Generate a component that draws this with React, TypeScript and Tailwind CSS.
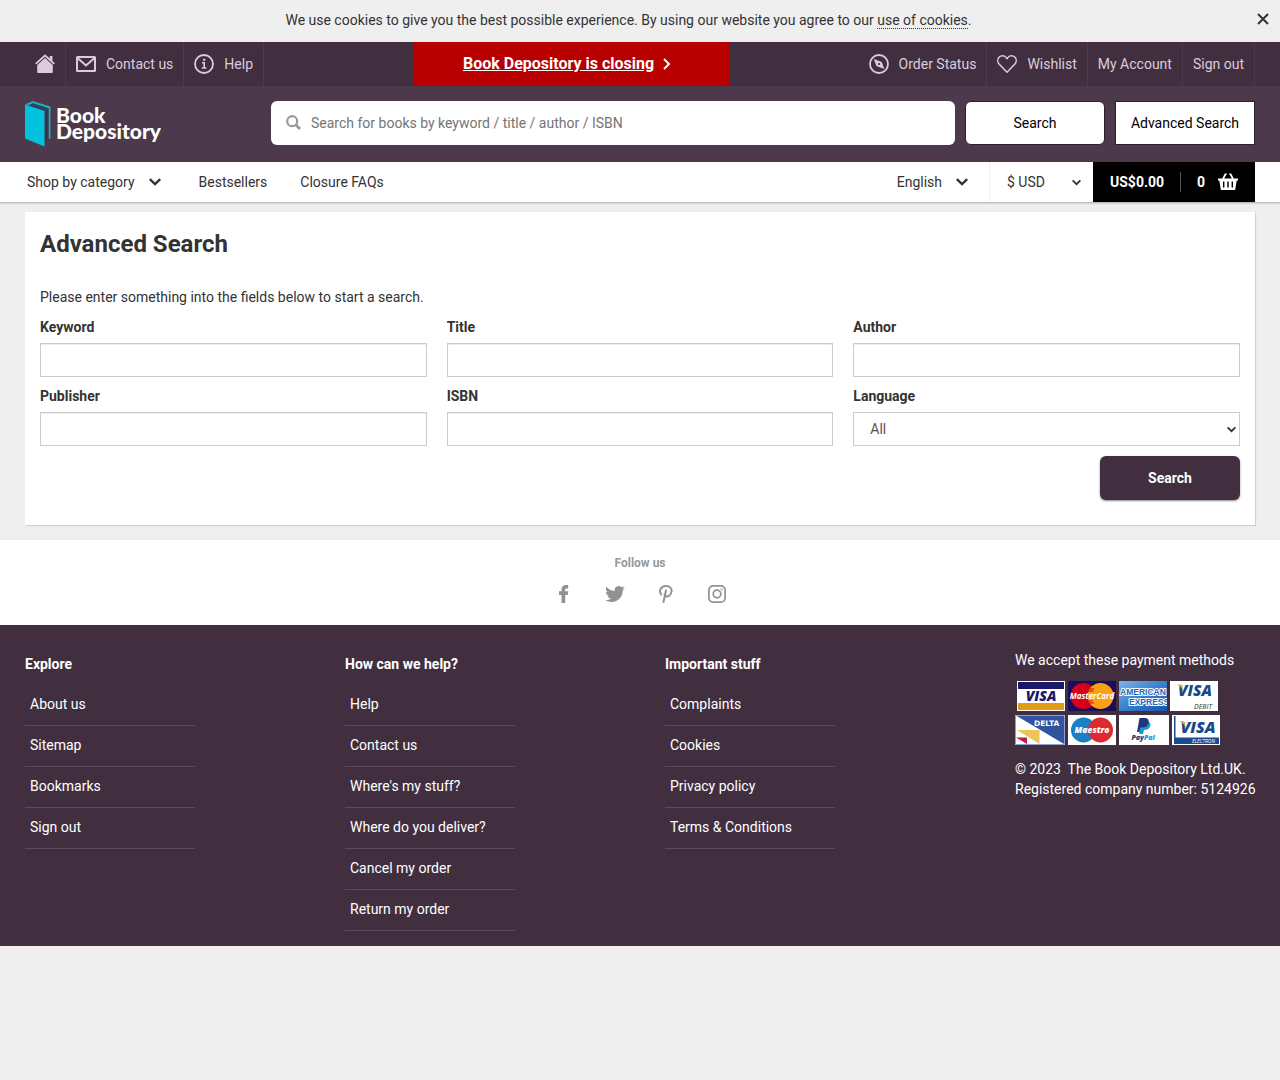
import React from "react";

type LinkItem = string;

const HomeIcon = () => (
  <svg width="20" height="20" viewBox="0 0 20 20" fill="currentColor" aria-hidden="true">
    <path d="M10 0.3 14.800 4.600V2h2.600v5L19.900 9.300l-1.200 1.200L10 2.700 1.300 10.500.1 9.300z" />
    <path d="M10 3.900 17.800 10.900V18q0 1-1 1H3.200q-1 0-1-1v-7.100z" />
  </svg>
);

const MailIcon = () => (
  <svg width="20" height="20" viewBox="0 0 20 20" fill="none" stroke="currentColor" strokeWidth="2" aria-hidden="true">
    <rect x="1" y="3" width="18" height="14" rx="0.5" />
    <path d="M1.500 4l8.500 7.500L18.500 4" />
  </svg>
);

const InfoIcon = () => (
  <svg width="20" height="20" viewBox="0 0 20 20" fill="none" stroke="currentColor" strokeWidth="1.8" aria-hidden="true">
    <circle cx="10" cy="10" r="9" />
    <path d="M8 8.800h2.200V14M7.800 14h4.600" strokeWidth="1.600" />
    <path d="M10.200 4.800v2" strokeWidth="2.200" />
  </svg>
);

const CompassIcon = () => (
  <svg width="20" height="20" viewBox="0 0 20 20" aria-hidden="true">
    <circle cx="10" cy="10" r="9" fill="none" stroke="currentColor" strokeWidth="1.8" />
    <path fillRule="evenodd" fill="currentColor" d="M4.800 5l8 3L15.300 15l-7.900-3zM10 8.900a1.100 1.100 0 100 2.200 1.100 1.100 0 000-2.200z" />
  </svg>
);

const HeartIcon = () => (
  <svg width="20" height="20" viewBox="0 0 20 20" fill="none" stroke="currentColor" strokeWidth="1.5" strokeLinejoin="round" aria-hidden="true">
    <path d="M10 18.200 2.100 10C.3 8 .4 5 2 3.200c2-2 5.300-1.900 7 .2l1 1.300 1-1.300c1.700-2.100 5-2.200 7-.2 1.600 1.800 1.700 4.800-.1 6.800z" />
  </svg>
);

const ChevronDown = ({ size = 12 }: { size?: number }) => (
  <svg width={size} height={size} viewBox="0 0 12 12" fill="none" stroke="currentColor" strokeWidth="2.4" aria-hidden="true">
    <path d="M0.800 3.200l5.200 5 5.200-5" />
  </svg>
);

const BasketIcon = () => (
  <svg width="20" height="18" viewBox="0 0 20 18" aria-hidden="true">
    <path d="M5 6l2.500-5M15 6l-2.500-5" stroke="currentColor" strokeWidth="1.700" />
    <path d="M7.200 1.100h1.600M11.200 1.100h1.600" stroke="currentColor" strokeWidth="1.400" />
    <path fill="currentColor" fillRule="evenodd" d="M0 5.500h20v2h-1.300L17.200 17H2.800L1.300 7.500H0zM5 8.500v6h1.400v-6zM9.300 8.500v6h1.400v-6zM13.600 8.500v6H15v-6z" />
  </svg>
);

const Logo = () => (
  <a href="#" aria-label="Book Depository" className="block h-[46px] w-[136px] shrink-0">
    <svg width="136" height="46" viewBox="0 0 136 46" aria-hidden="true">
      <path d="M0 3.500 7.500 0 25.500 5.500V37.500l-2 .8V7.500L7.500 2.500l-3 1.500z" fill="#2aa9ba" />
      <path d="M4.500 4 7.800 2.300 23.500 7.300V9l-3.500 1.500z" fill="#1d4961" />
      <path d="M20 10 23.500 8v30.300L20 40z" fill="#3b3650" />
      <path d="M0 3.500 19.500 10V45.500L0 37.500z" fill="#00c1de" />
      <g fill="#fff" fontFamily="Lato" fontWeight="900" fontSize="21">
        <text x="31" y="21.500">Book</text>
        <text x="31" y="38">Depository</text>
      </g>
    </svg>
  </a>
);

const topLink = "flex h-full items-center gap-2.5 border-r border-[#4d3a4d] px-2.5";

const FooterColumn = ({ title, links }: { title: string; links: LinkItem[] }) => (
  <section className="w-80">
    <h2 className="pt-[9px] font-bold leading-5">{title}</h2>
    <ul className="mt-[11px] w-[170px]">
      {links.map((link) => (
        <li key={link} className="border-b border-[#5c4d5d]">
          <a href="#" className="block px-[5px] pt-[9px] pb-[11px] leading-5">{link}</a>
        </li>
      ))}
    </ul>
  </section>
);

const Field = ({ id, label }: { id: string; label: string }) => (
  <div>
    <label htmlFor={id} className="mb-1.5 block font-bold leading-5">{label}</label>
    <input id={id} type="text" className="block h-[34px] w-full border border-[#ccc] px-3 shadow-[inset_0_1px_1px_rgba(0,0,0,0.075)] outline-none" />
  </div>
);

const cardText = { fontFamily: "Open Sans", fontWeight: 800, fontStyle: "italic" } as const;

const Visa = () => (
  <svg width="48" height="30" viewBox="0 0 48 30" role="img" aria-label="Visa">
    <rect width="48" height="30" fill="#fff" />
    <rect x="1" y="1" width="46" height="7" fill="#1a1768" />
    <rect x="1" y="22" width="46" height="7" fill="#e29c14" />
    <text x="24" y="20" textAnchor="middle" fontSize="14" fill="#1a1768" {...cardText}>VISA</text>
  </svg>
);

const MasterCard = () => (
  <svg width="48" height="30" viewBox="0 0 48 30" role="img" aria-label="MasterCard">
    <rect width="48" height="30" fill="#1b0d5e" />
    <circle cx="15.500" cy="15" r="13" fill="#d6001c" />
    <circle cx="32.500" cy="15" r="13" fill="#f9a013" />
    <path d="M20 8h6M19.500 10h6M19 20h6M20 22h6" stroke="#d6001c" />
    <text x="24" y="18" textAnchor="middle" fontSize="8" fill="#fff" fontFamily="Open Sans" fontWeight="700" fontStyle="italic">MasterCard</text>
  </svg>
);

const Amex = () => (
  <svg width="48" height="30" viewBox="0 0 48 30" role="img" aria-label="American Express">
    <defs>
      <linearGradient id="amex" x1="0" y1="0" x2="1" y2="1">
        <stop offset="0" stopColor="#7db4e6" />
        <stop offset="0.500" stopColor="#3a80cc" />
        <stop offset="1" stopColor="#1257b0" />
      </linearGradient>
    </defs>
    <rect width="48" height="30" fill="url(#amex)" />
    <g fill="#2567b5" stroke="#fff" strokeWidth="2" strokeLinejoin="round" paintOrder="stroke" fontFamily="Liberation Sans" fontWeight="700" fontSize="8.500">
      <text x="1" y="13.500">AMERICAN</text>
      <text x="10" y="23.500">EXPRESS</text>
    </g>
  </svg>
);

const VisaDebit = () => (
  <svg width="48" height="30" viewBox="0 0 48 30" role="img" aria-label="Visa Debit">
    <rect width="48" height="30" fill="#fff" />
    <text x="25" y="14.500" textAnchor="middle" fontSize="15.500" fill="#154a8b" {...cardText}>VISA</text>
    <path d="M7 3.500h3.500q1.500 0 2 2.500l.5 3q-2-3.500-6-5.500z" fill="#f0ad25" />
    <text x="24" y="28" fontSize="7" fill="#333" fontFamily="Open Sans" fontStyle="italic">DEBIT</text>
  </svg>
);

const Delta = () => (
  <svg width="50" height="30" viewBox="0 0 50 30" role="img" aria-label="Delta">
    <rect width="50" height="30" fill="#fff" />
    <path d="M0 0h49v29z" fill="#31549e" />
    <path d="M2 15h22.500v14z" fill="#eac55c" />
    <path d="M1 22.500h11V29z" fill="#c21a46" />
    <path d="M.5.500h49v29H.5z" fill="none" stroke="#8ca1cf" />
    <text x="19" y="11" fontSize="7.500" fontWeight="700" fill="#fff" fontFamily="DejaVu Sans">DELTA</text>
  </svg>
);

const Maestro = () => (
  <svg width="48" height="30" viewBox="0 0 48 30" role="img" aria-label="Maestro">
    <rect width="48" height="30" fill="#fff" />
    <circle cx="15.500" cy="15" r="12.500" fill="#1b7fc3" />
    <circle cx="32.500" cy="15" r="12.500" fill="#dc2a31" />
    <text x="24" y="18" textAnchor="middle" fontSize="8.500" fill="#fff" {...cardText}>Maestro</text>
  </svg>
);

const PayPal = () => (
  <svg width="50" height="30" viewBox="0 0 50 30" role="img" aria-label="PayPal">
    <rect width="50" height="30" fill="#fff" />
    <path d="M23 6h6q3.500 2 2 6-1.500 3-6 3l-1 4h-4z" fill="#179bd7" />
    <path d="M20.500 3H27q3.500 1 2.500 5-1 4.500-6 4.500h-2L20.500 17H18z" fill="#1f357c" />
    <text x="12.500" y="25" fontSize="7" {...cardText}>
      <tspan fill="#253b80">Pay</tspan>
      <tspan fill="#179bd7">Pal</tspan>
    </text>
  </svg>
);

const VisaElectron = () => (
  <svg width="48" height="30" viewBox="0 0 48 30" role="img" aria-label="Visa Electron">
    <rect width="48" height="30" fill="#fff" />
    <path d="M2 1h1.500v21.500H47V29H2z" fill="#1a4a90" />
    <text x="26" y="17.500" textAnchor="middle" fontSize="16" fill="#154a8b" {...cardText}>VISA</text>
    <path d="M7.500 6H11q1.500 0 2 2.500l.5 3q-2-3.500-6-5.500z" fill="#f0ad25" />
    <text x="20" y="28" fontSize="5" fill="#fff" fontFamily="Open Sans" fontStyle="italic">ELECTRON</text>
  </svg>
);

export default function App() {
  return (
    <div className="min-h-screen bg-[#efefef] font-[Roboto,sans-serif] text-sm leading-5 text-[#333]">
      <div className="flex h-[42px] items-center bg-[#efefef] pr-[11px]">
        <p className="flex-1 pb-0.5 text-center">
          We use cookies to give you the best possible experience. By using our website you agree to our{" "}
          <a href="#" className="border-b border-dotted border-[#333]">use of cookies</a>.
        </p>
        <button type="button" aria-label="Close" className="pb-1">
          <svg width="12" height="12" viewBox="0 0 12 12" stroke="currentColor" strokeWidth="2" aria-hidden="true">
            <path d="M1 1l10 10M11 1L1 11" />
          </svg>
        </button>
      </div>

      <header>
        <nav aria-label="Account" className="flex h-11 items-center bg-[#412f40] px-[25px] text-[#dccbdc]">
          <div className="flex h-full">
            <a href="#" aria-label="Home" className={topLink}><HomeIcon /></a>
            <a href="#" className={topLink}><MailIcon />Contact us</a>
            <a href="#" className={topLink}><InfoIcon />Help</a>
          </div>
          <a href="#" className="mr-auto ml-[149px] flex h-full w-[316px] items-center justify-center gap-2 bg-[#b80000] pr-2 text-base font-bold text-white">
            <span className="underline">Book Depository is closing</span>
            <svg width="9" height="12" viewBox="0 0 9 12" fill="none" stroke="currentColor" strokeWidth="2" aria-hidden="true">
              <path d="M2 1l5 5-5 5" />
            </svg>
          </a>
          <div className="flex h-full">
            <a href="#" className={topLink}><CompassIcon />Order Status</a>
            <a href="#" className={topLink}><HeartIcon />Wishlist</a>
            <a href="#" className={topLink}>My Account</a>
            <a href="#" className={topLink}>Sign out</a>
          </div>
        </nav>

        <div className="flex h-[76px] items-start bg-[#4c394b] px-[25px] pt-[15px]">
          <Logo />
          <form className="ml-[110px] flex flex-1 gap-2.5">
            <div className="flex h-11 flex-1 items-center gap-[9px] rounded-md bg-white pl-[15px]">
              <svg width="16" height="16" viewBox="0 0 16 16" fill="none" stroke="#999" strokeWidth="2.200" aria-hidden="true">
                <circle cx="6.200" cy="6.200" r="5" />
                <path d="M10 10l4 4" strokeWidth="2.800" />
              </svg>
              <input type="search" aria-label="Search for books" placeholder="Search for books by keyword / title / author / ISBN" className="h-full min-w-0 flex-1 outline-none placeholder:text-[#757575]" />
            </div>
            <button type="button" className="h-11 w-[140px] rounded-md border border-[#2d1f2c] bg-white text-black">Search</button>
            <a href="#" className="flex h-11 w-[140px] items-center justify-center border border-[#2d1f2c] bg-white text-black">Advanced Search</a>
          </form>
        </div>

        <nav aria-label="Main" className="flex h-10 items-center bg-white px-[25px] shadow-[0_1px_2px_rgba(0,0,0,0.3)]">
          <button type="button" className="flex items-center gap-3.5 pl-0.5">Shop by category <ChevronDown /></button>
          <a href="#" className="ml-[38px]">Bestsellers</a>
          <a href="#" className="ml-[33px]">Closure FAQs</a>
          <button type="button" className="ml-auto flex h-full items-center gap-3.5 border-r border-[#efefef] pr-[21px]">English <ChevronDown /></button>
          <div className="relative">
            <select aria-label="Currency" className="h-10 w-[103px] appearance-none pl-[17px]">
              <option>$ USD</option>
            </select>
            <span className="pointer-events-none absolute inset-y-0 right-3 flex items-center"><ChevronDown size={9} /></span>
          </div>
          <a href="#" className="flex h-full w-[162px] items-center bg-black pl-[17px] font-bold text-white">
            US$0.00
            <span className="ml-4 h-5 border-l border-[#555] pl-4">0</span>
            <span className="ml-[13px]"><BasketIcon /></span>
          </a>
        </nav>
      </header>

      <main className="mx-[25px] mt-2.5 mb-[15px] bg-white px-[15px] pt-4 pb-[25px] shadow-[1px_1px_1px_rgba(0,0,0,0.12)]">
        <h1 className="text-2xl font-bold">Advanced Search</h1>
        <p className="mt-[27px] mb-2.5">Please enter something into the fields below to start a search.</p>
        <form>
          <div className="grid grid-cols-3 gap-x-5 gap-y-[9px]">
            <Field id="keyword" label="Keyword" />
            <Field id="title" label="Title" />
            <Field id="author" label="Author" />
            <Field id="publisher" label="Publisher" />
            <Field id="isbn" label="ISBN" />
            <div>
              <label htmlFor="language" className="mb-1.5 block font-bold">Language</label>
              <div className="relative">
                <select id="language" className="block h-[34px] w-full appearance-none border border-[#ccc] bg-white pl-4 text-[#555]">
                  <option>All</option>
                </select>
                <span className="pointer-events-none absolute inset-y-0 right-1 flex items-center"><ChevronDown size={9} /></span>
              </div>
            </div>
          </div>
          <button type="button" className="mt-2.5 ml-auto block h-11 w-[140px] rounded-md bg-[#412f40] font-bold text-white shadow-[0_1px_2px_rgba(65,47,64,0.6)]">Search</button>
        </form>
      </main>

      <section className="h-[85px] bg-white pt-[13px] text-center text-[#999]">
        <h2 className="text-xs font-bold leading-5">Follow us</h2>
        <div className="mt-3 flex justify-center gap-[31px] text-[#929292]">
          <a href="#" aria-label="Facebook">
            <svg width="20" height="18" viewBox="0 0 20 18" fill="currentColor" aria-hidden="true">
              <path d="M7.500 18V10H5V6.200H7.500V4.500Q7.500 0 12 0h2.200v3.400h-1.700q-1.300 0-1.300 1.300v1.500H14.200L13.700 10h-2.500v8z" />
            </svg>
          </a>
          <a href="#" aria-label="Twitter">
            <svg width="20" height="18" viewBox="0 1 24 22" fill="currentColor" aria-hidden="true">
              <path d="M23.950 4.570a10 10 0 01-2.820.77 4.960 4.960 0 002.160-2.720c-.95.55-2 .95-3.130 1.180a4.920 4.920 0 00-8.380 4.480C7.690 8.090 4.070 6.130 1.640 3.160a4.820 4.820 0 00-.67 2.480c0 1.710.87 3.210 2.190 4.100a4.900 4.900 0 01-2.230-.62v.06a4.920 4.920 0 003.950 4.830 5 5 0 01-2.210.08 4.940 4.940 0 004.600 3.420A9.870 9.870 0 010 19.540a13.990 13.990 0 007.550 2.210c9.050 0 14-7.500 14-13.980 0-.21 0-.42-.02-.63a9.940 9.940 0 002.420-2.570z" />
            </svg>
          </a>
          <a href="#" aria-label="Pinterest">
            <svg width="20" height="18" viewBox="0 0 20 18" fill="none" stroke="currentColor" strokeWidth="2" strokeLinecap="round" aria-hidden="true">
              <path d="M10 5.500 7.500 17M5 9.500C2.500 5 5.500 1 10 1c4 0 6 2.500 5.500 5.500-.5 4-3.500 5.500-5.500 4.800-1-.3-1.500-1-1.500-1.800" />
            </svg>
          </a>
          <a href="#" aria-label="Instagram">
            <svg width="20" height="18" viewBox="0 0 20 18" fill="none" stroke="currentColor" strokeWidth="1.700" aria-hidden="true">
              <rect x="1.900" y="0.900" width="16.200" height="16.200" rx="4.200" />
              <circle cx="10" cy="9" r="3.800" />
              <circle cx="14.600" cy="4.400" r="0.300" />
            </svg>
          </a>
        </div>
      </section>

      <footer className="flex justify-between bg-[#412f40] px-[25px] pt-5 pb-[15px] text-white">
        <div className="flex">
          <FooterColumn title="Explore" links={["About us", "Sitemap", "Bookmarks", "Sign out"]} />
          <FooterColumn title="How can we help?" links={["Help", "Contact us", "Where's my stuff?", "Where do you deliver?", "Cancel my order", "Return my order"]} />
          <FooterColumn title="Important stuff" links={["Complaints", "Cookies", "Privacy policy", "Terms & Conditions"]} />
        </div>
        <section className="w-60 shrink-0 whitespace-nowrap pt-[5px]">
          <h2>We accept these payment methods</h2>
          <div className="mt-[11px] flex gap-[3px] pl-0.5"><Visa /><MasterCard /><Amex /><VisaDebit /></div>
          <div className="mt-1 flex gap-[3px]"><Delta /><Maestro /><PayPal /><VisaElectron /></div>
          <p className="mt-3.5">© 2023&nbsp; The Book Depository Ltd.UK.<br />Registered company number: 5124926</p>
        </section>
      </footer>
    </div>
  );
}
